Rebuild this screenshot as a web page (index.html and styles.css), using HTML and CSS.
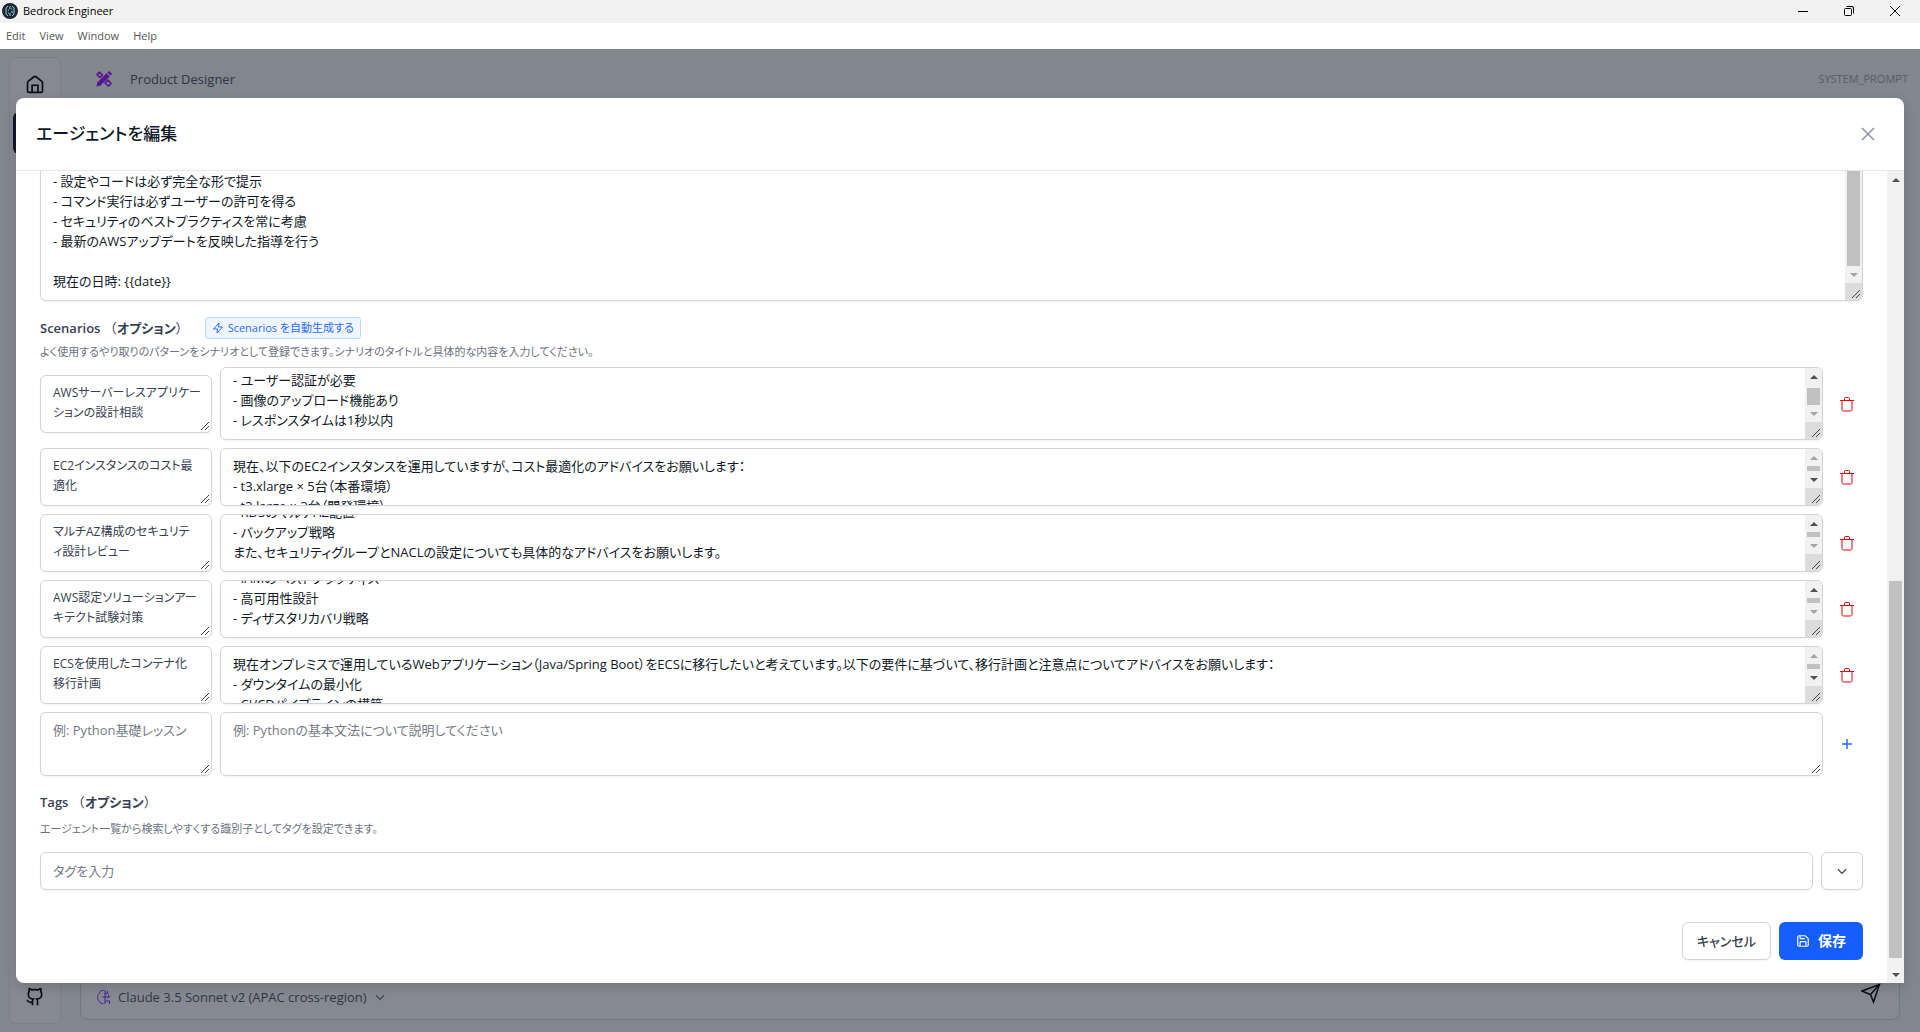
FILE: index.html
```html
<!DOCTYPE html>
<html lang="ja">
<head>
<meta charset="utf-8">
<title>Bedrock Engineer</title>
<link rel="stylesheet" href="styles.css">
</head>
<body>
<svg class="sprite" aria-hidden="true">
  <symbol id="trash" viewBox="0 0 16 16"><path d="M1 4.500h14M3 4.500v9A1.500 1.500 0 0 0 4.500 15h7a1.500 1.500 0 0 0 1.500-1.500v-9M5.500 4.500v-2a1 1 0 0 1 1-1h3a1 1 0 0 1 1 1v2"/></symbol>
  <symbol id="grip" viewBox="0 0 10 10"><path d="M1 9 9 1M5 9l4-4"/></symbol>
  <symbol id="chevron" viewBox="0 0 24 24"><path d="m5 9 7 7 7-7"/></symbol>
</svg>

<header class="titlebar">
  <svg class="logo" viewBox="0 0 16 16"><circle cx="8" cy="8" r="8" fill="#1c2733"/><g fill="none" stroke="#8fd0e0" stroke-width="1"><path d="M6 3 4 5v6l2 2M10 3l2 2v6l-2 2M8 3v3M8 10v3M6 7h1M9 9h2M6 10h1M9 6h1"/></g></svg>
  <span class="app-name">Bedrock Engineer</span>
  <div class="window-controls">
    <button aria-label="Minimize"><svg viewBox="0 0 10 10"><path d="M0 5.500h10"/></svg></button>
    <button aria-label="Restore"><svg viewBox="0 0 10 10"><rect x=".5" y="2.500" width="7" height="7" rx="1"/><path d="M2.500.5H8A1.500 1.500 0 0 1 9.500 2v5.500"/></svg></button>
    <button aria-label="Close window"><svg viewBox="0 0 10 10"><path d="m0 0 10 10M10 0 0 10"/></svg></button>
  </div>
</header>
<nav class="menubar">
  <button>Edit</button><button>View</button><button>Window</button><button>Help</button>
</nav>

<div class="app">
  <aside class="sidebar">
    <a href="#home" aria-label="Home"><svg viewBox="0 0 24 24"><path d="M3 10.500a2 2 0 0 1 .8-1.600l7-5.600a2 2 0 0 1 2.400 0l7 5.600a2 2 0 0 1 .8 1.600V20a2 2 0 0 1-2 2H5a2 2 0 0 1-2-2z"/><path d="M8.500 22v-8.500h7V22"/></svg></a>
    <a href="#chat" class="active" aria-label="Chat"></a>
    <a href="#github" class="github" aria-label="GitHub"><svg viewBox="0 0 24 24"><path d="M15 22v-4a4.800 4.800 0 0 0-1-3.500c3 0 6-2 6-5.500.080-1.250-.270-2.480-1-3.500.280-1.150.280-2.350 0-3.500 0 0-1 0-3 1.500-2.640-.5-5.360-.5-8 0C6 2 5 2 5 2c-.3 1.150-.3 2.350 0 3.500A5.400 5.400 0 0 0 4 9c0 3.500 3 5.500 6 5.500-.390.490-.680 1.050-.850 1.650S8.930 17.380 9 18v4M9 18c-4.510 2-5-2-7-2"/></svg></a>
  </aside>
  <main class="chat">
    <div class="chat-head">
      <svg class="agent-icon" viewBox="0 0 16 16"><path d="m.5 15.500.8-4L10.500 2.300l3.200 3.200L4.500 14.500z" fill="currentColor"/><path d="M12.300.8 15.200 3.700" stroke="currentColor" stroke-width="2.400"/><path d="M3.500 1 6.500 4 4 6.500l-3-3zM12 9l3 3.500-2.500 2.500L9 12z" fill="none" stroke="currentColor" stroke-width="1.600" stroke-linejoin="round"/></svg>
      <span class="agent-name">Product Designer</span>
      <span class="prompt-tag">SYSTEM_PROMPT</span>
    </div>
    <div class="composer">
      <button class="model">
        <svg viewBox="0 0 16 16"><path d="M7.500 1.500C5 1 3.500 2.500 3.500 4.500 1.800 5.500 1.200 7 1.800 8.500 1.200 10 2 11.500 3.500 12 4 14 5.500 15 7.500 14.500M9 1v14M9 4.500h2.500V2M9 8h5M12.500 5.500V8M9 12h4.500v3M6.500 8H9"/></svg>
        <span>Claude 3.5 Sonnet v2 (APAC cross-region)</span>
        <svg class="chev"><use href="#chevron"/></svg>
      </button>
      <button class="send" aria-label="Send"><svg viewBox="0 0 20 20"><path d="M1 8 18.500 1.500 12.500 19 9.500 11.500zM9.500 11.500l9-10"/></svg></button>
    </div>
  </main>
  <div class="backdrop"></div>

  <section class="modal" role="dialog" aria-modal="true" aria-labelledby="modal-title">
    <div class="modal-head">
      <h2 id="modal-title">エージェントを編集</h2>
      <button class="close" aria-label="閉じる"><svg viewBox="0 0 12 12"><path d="m0 0 12 12M12 0 0 12"/></svg></button>
    </div>
    <div class="modal-body">
      <form class="form" data-scroll="end">
        <div class="field prompt has-bar">
          <textarea data-scroll="end" aria-label="System Prompt">## 注意事項
- 回答は日本語で行う
- 設定やコードは必ず完全な形で提示
- コマンド実行は必ずユーザーの許可を得る
- セキュリティのベストプラクティスを常に考慮
- 最新のAWSアップデートを反映した指導を行う

現在の日時: {{date}}</textarea>
          <div class="bar at-end"><i class="up"></i><b class="thumb"></b><i class="down"></i><span class="corner"></span></div>
          <svg class="grip"><use href="#grip"/></svg>
        </div>

        <div class="label-row">
          <h3>Scenarios <span class="wide">（</span>オプション<span class="wide">）</span></h3>
          <button type="button" class="generate"><svg viewBox="0 0 24 24"><path d="M14 2 3 14h8l-1 8 11-12h-8z"/></svg>Scenarios を自動生成する</button>
        </div>
        <p class="hint">よく使用するやり取りのパターンをシナリオとして登録できます。シナリオのタイトルと具体的な内容を入力してください。</p>

        <div class="scenarios">
          <div class="scenario">
            <div class="field name"><textarea aria-label="シナリオのタイトル 1">AWSサーバーレスアプリケー
ションの設計相談</textarea><svg class="grip"><use href="#grip"/></svg></div>
            <div class="field tall has-bar"><textarea data-scroll="end" aria-label="シナリオの内容 1">以下の要件でサーバーレスアプリケーションの設計を相談したいです：
- ユーザー認証が必要
- 画像のアップロード機能あり
- レスポンスタイムは1秒以内</textarea><div class="bar at-end"><i class="up"></i><b class="thumb"></b><i class="down"></i><span class="corner"></span></div><svg class="grip"><use href="#grip"/></svg></div>
            <button type="button" class="remove" aria-label="削除"><svg><use href="#trash"/></svg></button>
          </div>
          <div class="scenario">
            <div class="field name"><textarea aria-label="シナリオのタイトル 2">EC2インスタンスのコスト最
適化</textarea><svg class="grip"><use href="#grip"/></svg></div>
            <div class="field has-bar"><textarea aria-label="シナリオの内容 2">現在、以下のEC2インスタンスを運用していますが、コスト最適化のアドバイスをお願いします：
- t3.xlarge × 5台（本番環境）
- t3.large × 3台（開発環境）</textarea><div class="bar at-start"><i class="up"></i><b class="thumb"></b><i class="down"></i><span class="corner"></span></div><svg class="grip"><use href="#grip"/></svg></div>
            <button type="button" class="remove" aria-label="削除"><svg><use href="#trash"/></svg></button>
          </div>
          <div class="scenario">
            <div class="field name"><textarea aria-label="シナリオのタイトル 3">マルチAZ構成のセキュリテ
ィ設計レビュー</textarea><svg class="grip"><use href="#grip"/></svg></div>
            <div class="field has-bar"><textarea data-scroll="end" aria-label="シナリオの内容 3">- RDSのマルチAZ配置
- バックアップ戦略
また、セキュリティグループとNACLの設定についても具体的なアドバイスをお願いします。</textarea><div class="bar at-end"><i class="up"></i><b class="thumb"></b><i class="down"></i><span class="corner"></span></div><svg class="grip"><use href="#grip"/></svg></div>
            <button type="button" class="remove" aria-label="削除"><svg><use href="#trash"/></svg></button>
          </div>
          <div class="scenario">
            <div class="field name"><textarea aria-label="シナリオのタイトル 4">AWS認定ソリューションアー
キテクト試験対策</textarea><svg class="grip"><use href="#grip"/></svg></div>
            <div class="field has-bar"><textarea data-scroll="end" aria-label="シナリオの内容 4">- IAMのベストプラクティス
- 高可用性設計
- ディザスタリカバリ戦略</textarea><div class="bar at-end"><i class="up"></i><b class="thumb"></b><i class="down"></i><span class="corner"></span></div><svg class="grip"><use href="#grip"/></svg></div>
            <button type="button" class="remove" aria-label="削除"><svg><use href="#trash"/></svg></button>
          </div>
          <div class="scenario">
            <div class="field name"><textarea aria-label="シナリオのタイトル 5">ECSを使用したコンテナ化
移行計画</textarea><svg class="grip"><use href="#grip"/></svg></div>
            <div class="field has-bar"><textarea aria-label="シナリオの内容 5">現在オンプレミスで運用しているWebアプリケーション（Java/Spring Boot）をECSに移行したいと考えています。以下の要件に基づいて、移行計画と注意点についてアドバイスをお願いします：
- ダウンタイムの最小化
- CI/CDパイプラインの構築</textarea><div class="bar at-start"><i class="up"></i><b class="thumb"></b><i class="down"></i><span class="corner"></span></div><svg class="grip"><use href="#grip"/></svg></div>
            <button type="button" class="remove" aria-label="削除"><svg><use href="#trash"/></svg></button>
          </div>
          <div class="scenario">
            <div class="field new"><textarea aria-label="新しいシナリオのタイトル" placeholder="例: Python基礎レッスン"></textarea><svg class="grip"><use href="#grip"/></svg></div>
            <div class="field new"><textarea aria-label="新しいシナリオの内容" placeholder="例: Pythonの基本文法について説明してください"></textarea><svg class="grip"><use href="#grip"/></svg></div>
            <button type="button" class="add" aria-label="追加"><svg viewBox="0 0 24 24"><path d="M12 2v20M2 12h20"/></svg></button>
          </div>
        </div>

        <label class="tags-label" for="tags">Tags <span class="wide">（</span>オプション<span class="wide">）</span></label>
        <p class="hint">エージェント一覧から検索しやすくする識別子としてタグを設定できます。</p>
        <div class="tags">
          <input id="tags" type="text" placeholder="タグを入力">
          <button type="button" class="outline toggle" aria-label="タグ一覧"><svg><use href="#chevron"/></svg></button>
        </div>

        <div class="actions">
          <button type="button" class="outline cancel">キャンセル</button>
          <button type="submit" class="save"><svg viewBox="0 0 24 24"><path d="M15.200 3a2 2 0 0 1 1.400.6l3.800 3.800a2 2 0 0 1 .6 1.400V19a2 2 0 0 1-2 2H5a2 2 0 0 1-2-2V5a2 2 0 0 1 2-2zM17 21v-7a1 1 0 0 0-1-1H8a1 1 0 0 0-1 1v7M7 3v4a1 1 0 0 0 1 1h7"/></svg>保存</button>
        </div>
      </form>
      <div class="bar page-bar"><i class="up"></i><div class="track"><b class="thumb"></b></div><i class="down"></i></div>
    </div>
  </section>
</div>
<script src="script.js"></script>
</body>
</html>
```
FILE: styles.css
```css
* { box-sizing: border-box; }

body {
  margin: 0;
  height: 100vh;
  display: flex;
  flex-direction: column;
  overflow: hidden;
  font: 13px/20px "Open Sans", "Noto Sans CJK JP", sans-serif;
  font-feature-settings: "palt";
  color: #374151;
}

button, input, textarea {
  font: inherit;
  font-feature-settings: inherit;
  color: inherit;
  margin: 0;
}

button {
  padding: 0;
  border: 0;
  background: none;
  display: flex;
  align-items: center;
  justify-content: center;
}

svg {
  fill: none;
  stroke: currentColor;
  flex: none;
}

.sprite { display: none; }

/* window chrome */
.titlebar {
  height: 23px;
  flex: none;
  display: flex;
  align-items: center;
  gap: 5px;
  padding: 0 2px 2px;
  background: #f2f2f2;
  color: #000;
  font-size: 11px;
}
.logo { width: 16px; height: 16px; stroke: none; }
.window-controls { margin-left: auto; display: flex; }
.window-controls button { width: 46px; height: 20px; }
.window-controls svg { width: 10px; height: 10px; overflow: visible; }

.menubar {
  height: 26px;
  flex: none;
  display: flex;
  align-items: center;
  gap: 14px;
  padding-left: 6px;
  background: #fff;
  font-size: 11px;
  color: #555;
}

/* page behind the dialog */
.app {
  flex: 1;
  min-height: 0;
  position: relative;
  display: flex;
  gap: 19px;
  padding: 8px 20px 8px 9px;
  background: #f3f4f6;
}
.backdrop {
  position: absolute;
  inset: 0;
  background: rgba(17, 24, 39, 0.5);
}
.sidebar {
  width: 52px;
  display: flex;
  flex-direction: column;
  align-items: center;
  padding: 14px 3px;
  border: 1px solid #e2e5e9;
  border-radius: 6px;
  background: #fafafa;
  color: #000;
}
.sidebar a { color: inherit; display: grid; place-items: center; height: 24px; }
.sidebar svg { width: 20px; height: 20px; stroke-width: 2; }
.sidebar .active {
  width: 100%;
  height: 42px;
  margin-top: 16px;
  border-radius: 6px;
  background: #111827;
}
.sidebar .github { margin-top: auto; }

.chat { flex: 1; display: flex; flex-direction: column; justify-content: space-between; }
.chat-head { display: flex; align-items: center; padding: 12px 0 0 16px; margin-right: -8px; color: #4b5563; }
.agent-icon { width: 16px; height: 16px; color: #9810fa; stroke: none; margin-right: 18px; }
.prompt-tag { margin-left: auto; font-size: 11px; color: #9ca3af; }
.composer {
  height: 72px;
  margin-bottom: 4px;
  padding: 0 18px 12px 15px;
  display: flex;
  align-items: flex-end;
  justify-content: space-between;
  border: 1px solid #d1d5db;
  border-radius: 8px;
  background: #fafafa;
}
.model { gap: 6px; color: #4b5563; }
.model svg { width: 16px; height: 16px; color: #7f22fe; stroke-width: 1; }
.model .chev { width: 14px; height: 14px; color: #6b7280; stroke-width: 2; }
.send { color: #000; }
.send svg { width: 20px; height: 28px; stroke-width: 1.5; }

/* dialog */
.modal {
  position: absolute;
  inset: 49px 16px;
  display: flex;
  flex-direction: column;
  overflow: hidden;
  border-radius: 8px 8px 0 8px;
  background: #fff;
  box-shadow: 0 4px 12px rgba(0, 0, 0, 0.15);
}
.modal-head {
  height: 73px;
  flex: none;
  display: flex;
  align-items: center;
  justify-content: space-between;
  padding: 0 30px 0 20px;
  border-bottom: 1px solid #e5e7eb;
}
.modal-head h2 { margin: 0; font-size: 17px; font-weight: 500; color: #111827; }
.close svg { width: 12px; height: 12px; color: #8b93a1; stroke-width: 1.5; overflow: visible; }

.modal-body { flex: 1; min-height: 0; display: flex; }
.form {
  flex: 1;
  min-width: 0;
  padding: 24px 24px 23px;
  overflow: auto;
  scrollbar-width: none;
}

/* text fields */
.field {
  position: relative;
  display: flex;
  height: 58px;
  overflow: hidden;
  border: 1px solid #d1d5db;
  border-radius: 6px;
  background: #fff;
  box-shadow: 0 1px 2px rgba(0, 0, 0, 0.05);
}
.field.tall { height: 73px; }
.field.new { height: 64px; }
.field.prompt { height: 160px; margin-bottom: 16px; }
.field.name { font-size: 12px; }
.field textarea {
  flex: 1;
  min-width: 0;
  padding: 7px 0 9px 12px;
  border: 0;
  outline: 0;
  resize: none;
  background: none;
  overflow: auto;
  scrollbar-width: none;
}
.has-bar textarea { color: #111827; }
::placeholder { color: #757b86; opacity: 1; }
.grip {
  position: absolute;
  right: 1px;
  bottom: 1px;
  width: 10px;
  height: 10px;
  color: #444;
  stroke-width: 1;
}

/* scroll bars with arrow buttons */
.bar {
  width: 17px;
  flex: none;
  display: flex;
  flex-direction: column;
  align-items: center;
  background: #f1f1f1;
}
.up, .down { width: 17px; height: 17px; flex: none; display: grid; place-items: center; }
.up::before, .down::before {
  content: "";
  border: 4px solid transparent;
}
.up::before { border-top: 0; border-bottom-color: #505050; }
.down::before { border-bottom: 0; border-top-color: #505050; }
.at-start .up::before { border-bottom-color: #a3a3a3; }
.at-end .down::before { border-top-color: #a3a3a3; }
.thumb { width: 13px; flex: 1; background: #c1c1c1; }
.tall .thumb { margin-top: 3px; }
.corner { width: 17px; height: 17px; flex: none; background: #dcdcdc; }
.track { flex: 1; display: flex; flex-direction: column; justify-content: flex-end; padding-bottom: 8px; }
.track .thumb { flex: 0 0 49%; }

/* scenarios */
.label-row { display: flex; align-items: center; gap: 16px; height: 22px; }
.label-row h3, .tags-label { margin: 0; font-size: 13px; font-weight: 600; }
.wide { font-weight: 400; font-feature-settings: "palt" 0; }
.generate {
  height: 22px;
  gap: 4px;
  padding: 0 6px;
  border: 1px solid #bedbff;
  border-radius: 3px;
  background: #eff6ff;
  color: #2b6bfa;
  font-size: 11px;
}
.generate svg { width: 12px; height: 12px; stroke-width: 2; }
.hint { margin: 5px 0 7px; font-size: 11px; line-height: 16px; color: #6b7280; }
.scenarios { display: grid; gap: 8px; }
.scenario {
  display: grid;
  grid-template-columns: 172px 1fr 32px;
  gap: 8px;
  align-items: center;
}
.remove svg { width: 16px; height: 16px; color: #e7000b; stroke-width: 1; }
.add svg { width: 12px; height: 12px; color: #2b6bfa; stroke-width: 3; }
.remove, .add { height: 32px; }

/* tags and footer */
.tags-label { display: block; margin: 16px 0 9px; }
.tags-label + .hint { margin: 0 0 15px; }
.tags { display: flex; gap: 8px; }
.tags input {
  flex: 1;
  height: 38px;
  padding: 0 12px;
  border: 1px solid #d1d5db;
  border-radius: 6px;
  box-shadow: 0 1px 2px rgba(0, 0, 0, 0.05);
}
.outline, .save { height: 38px; border-radius: 6px; font-weight: 500; }
.outline {
  border: 1px solid #d1d5db;
  background: #fff;
  box-shadow: 0 1px 2px rgba(0, 0, 0, 0.05);
}
.toggle { width: 42px; }
.toggle svg { width: 14px; height: 14px; stroke-width: 2; }
.actions { display: flex; justify-content: flex-end; gap: 8px; margin-top: 32px; }
.cancel { width: 89px; }
.save { width: 84px; gap: 8px; background: #155dfc; color: #fff; font-size: 14px; font-weight: 700; }
.save svg { width: 14px; height: 14px; stroke-width: 2; }
```
FILE: script.js
```js
// Panes marked with data-scroll="end" open at their last line.
document.querySelectorAll('[data-scroll="end"]').forEach((pane) => {
  pane.scrollTop = pane.scrollHeight;
});
```
